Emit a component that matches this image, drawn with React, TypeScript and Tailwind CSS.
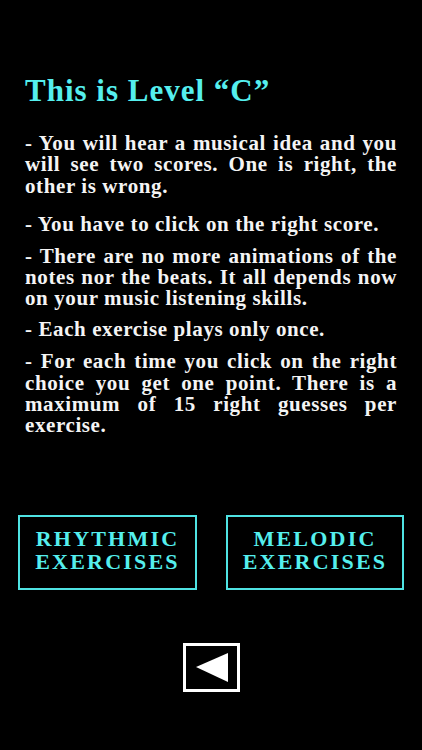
import React from "react";

const serif = { fontFamily: '"Liberation Serif", "DejaVu Serif", serif' };

export default function App() {
  return (
    <div className="w-[422px] h-[750px] bg-black flex flex-col" style={serif}>
      <div className="px-[25px] pt-[73px]">
        <h1 className="text-[31px] leading-[36px] font-bold tracking-[1px] text-[#55efee]">This is Level “C”</h1>
        <div className="mt-[24px] text-[21px] leading-[21.4px] font-bold tracking-[0.6px] text-[#f4f4f4] text-justify">
          <p>- You will hear a musical idea and you will see two scores. One is right, the other is wrong.</p>
          <p className="mt-[17px]">- You have to click on the right score.</p>
          <p className="mt-[10px]">- There are no more animations of the notes nor the beats. It all depends now on your music listening skills.</p>
          <p className="mt-[9px]">- Each exercise plays only once.</p>
          <p className="mt-[11px]">- For each time you click on the right choice you get one point. There is a maximum of 15 right guesses per exercise.</p>
        </div>
      </div>
      <div className="mt-auto mb-[58px] flex flex-col items-center">
        <div className="flex gap-[29px] w-[386px]">
          <div className="w-[179px] h-[75px] pb-[5px] border-2 border-[#4fe3e3] flex items-center justify-center text-center text-[#55efee] font-bold text-[22px] leading-[23px] tracking-[2.2px]">
            <div>RHYTHMIC<br />EXERCISES</div>
          </div>
          <div className="w-[178px] h-[75px] pb-[5px] border-2 border-[#4fe3e3] flex items-center justify-center text-center text-[#55efee] font-bold text-[22px] leading-[23px] tracking-[2.2px]">
            <div>MELODIC<br />EXERCISES</div>
          </div>
        </div>
        <div className="mt-[53px] w-[57px] h-[49px] border-[3px] border-white flex">
          <svg width="51" height="43" viewBox="0 0 51 43">
            <polygon points="10,21 42,7 42,36" fill="white" />
          </svg>
        </div>
      </div>
    </div>
  );
}
